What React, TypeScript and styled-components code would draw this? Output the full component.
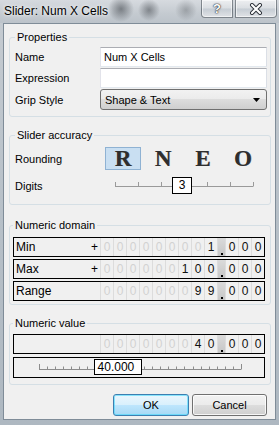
import React from 'react';
import styled, { createGlobalStyle } from 'styled-components';

const Global = createGlobalStyle`
  html, body { margin: 0; padding: 0; background: #fff; }
  body { font-family: "Liberation Sans", Arial, sans-serif; font-size: 11px; color: #000; }
  * { box-sizing: border-box; }
`;

const Window = styled.div`
  width: 279px;
  height: 425px;
  display: flex;
  flex-direction: column;
  background: linear-gradient(180deg, #c6ccd2 0%, #b7c0c8 50%, #aeb8c1 100%);
  overflow: hidden;
`;

const TitleBar = styled.div`
  height: 23px;
  flex: none;
  display: flex;
  align-items: flex-start;
  background:
    radial-gradient(circle at 121px 9px, rgba(55, 60, 66, 0.55) 0, rgba(55, 60, 66, 0) 13px),
    radial-gradient(circle at 149px 10px, rgba(55, 60, 66, 0.5) 0, rgba(55, 60, 66, 0) 11px),
    radial-gradient(circle at 186px 10px, rgba(70, 75, 80, 0.35) 0, rgba(70, 75, 80, 0) 11px),
    linear-gradient(180deg, #d6dadf 0%, #c4cad0 60%, #bcc3ca 100%);
`;

const TitleText = styled.div`
  flex: 1;
  padding-left: 4px;
  font-size: 12px;
  line-height: 22px;
  color: #000;
  text-shadow: 0 0 6px rgba(255, 255, 255, 0.9), 0 0 3px rgba(255, 255, 255, 0.9);
  white-space: nowrap;
`;

const Captions = styled.div`
  display: flex;
  gap: 2px;
  margin-right: 2px;
`;

const CaptionButton = styled.div<{ $w: number; $left?: boolean }>`
  width: ${(p) => p.$w}px;
  height: 18px;
  display: flex;
  align-items: center;
  justify-content: center;
  border: 1px solid rgba(45, 55, 65, 0.55);
  border-top: none;
  border-radius: ${(p) => (p.$left ? '0 0 0 4px' : '0 0 4px 0')};
  background: linear-gradient(
    180deg,
    rgba(255, 255, 255, 0.55) 0%,
    rgba(255, 255, 255, 0.3) 48%,
    rgba(190, 200, 210, 0.35) 52%,
    rgba(255, 255, 255, 0.5) 100%
  );
  box-shadow: inset 0 0 0 1px rgba(255, 255, 255, 0.55);
  color: #fff;
  font-weight: bold;
  font-size: 13px;
  text-shadow: 0 0 1px #000, 0 0 2px #223;
`;

const Frame = styled.div`
  flex: 1;
  display: flex;
  padding: 0 3px 5px 3px;
`;

const Client = styled.div`
  flex: 1;
  display: flex;
  flex-direction: column;
  background: #f0f0f0;
  border: 1px solid #7f8c98;
`;

const Group = styled.fieldset<{ $top: number; $pad: string }>`
  margin: ${(p) => p.$top}px 4px 0 5px;
  padding: ${(p) => p.$pad};
  border: 1px solid #d5dfe5;
  border-radius: 3px;
  min-width: 0;
`;

const Legend = styled.legend`
  padding: 0 2px;
  margin: 0;
  font-size: 11px;
  line-height: 14px;
`;

const FormGrid = styled.div`
  display: grid;
  grid-template-columns: 85px 1fr;
  row-gap: 1px;
  align-items: center;
`;

const Label = styled.div`
  font-size: 11px;
  white-space: nowrap;
`;

const TextBox = styled.div`
  height: 20px;
  background: #fff;
  border: 1px solid #abadb3;
  border-color: #abadb3 #dbdfe6 #e3e9ef #e2e3ea;
  padding-left: 3px;
  font-size: 11px;
  line-height: 18px;
`;

const Combo = styled.div`
  height: 21px;
  display: flex;
  align-items: center;
  justify-content: space-between;
  padding: 0 6px 0 4px;
  border: 1px solid #707070;
  border-radius: 3px;
  background: linear-gradient(180deg, #f2f2f2 0%, #ebebeb 49%, #dddddd 50%, #cfcfcf 100%);
  font-size: 11px;
`;

const AccuracyRow = styled.div<{ $h: number; $mt?: number }>`
  display: grid;
  grid-template-columns: 90px 1fr;
  align-items: center;
  height: ${(p) => p.$h}px;
  margin-top: ${(p) => p.$mt ?? 0}px;
`;

const Letters = styled.div`
  display: flex;
  gap: 4px;
`;

const LetterBox = styled.div<{ $active?: boolean }>`
  width: 36px;
  height: 23px;
  display: flex;
  align-items: center;
  justify-content: center;
  font-family: "Liberation Serif", "Times New Roman", serif;
  font-weight: bold;
  font-size: 23px;
  line-height: 23px;
  color: #2e2e2e;
  text-shadow: 0.5px 0 0 #8a8a8a;
  background: ${(p) => (p.$active ? '#c9dff2' : 'transparent')};
  border: 1px solid ${(p) => (p.$active ? '#8fb2d3' : 'transparent')};
`;

const SliderTrack = styled.div`
  position: relative;
  width: 160px;
  height: 18px;
`;

const SliderThumb = styled.div<{ $w: number; $h: number; $top: number }>`
  position: absolute;
  top: ${(p) => p.$top}px;
  width: ${(p) => p.$w}px;
  height: ${(p) => p.$h}px;
  background: #fff;
  border: 1px solid #000;
  font-size: 12px;
  line-height: ${(p) => p.$h - 2}px;
  text-align: center;
`;

const ValueThumb = styled(SliderThumb)`
  text-align: left;
  padding-left: 3px;
`;

const Rows = styled.div<{ $gap: number }>`
  display: flex;
  flex-direction: column;
  gap: ${(p) => p.$gap}px;
`;

const NumRow = styled.div<{ $h: number }>`
  height: ${(p) => p.$h}px;
  display: flex;
  align-items: stretch;
  border: 1px solid #000;
  font-size: 12px;
  position: relative;
`;

const RowLabel = styled.div`
  flex: 1;
  padding-left: 2px;
  display: flex;
  align-items: center;
`;

const Plus = styled.div`
  width: 10px;
  display: flex;
  align-items: center;
  justify-content: flex-end;
  padding-right: 2px;
`;

const Cells = styled.div`
  display: flex;
`;

const Cell = styled.div<{ $ghost?: boolean }>`
  width: 13px;
  display: flex;
  align-items: center;
  justify-content: center;
  border-left: 1px solid #dcdcdc;
  color: ${(p) => (p.$ghost ? '#d2d2d2' : '#111')};
  font-size: 12px;
`;

const Sep = styled.div`
  width: 8px;
  display: flex;
  align-items: flex-end;
  justify-content: center;
  border-left: 1px solid #dcdcdc;
  background: linear-gradient(180deg, #dadada 0%, #c6c6c6 100%);
`;

const Dot = styled.div`
  width: 2px;
  height: 2px;
  margin-bottom: 1px;
  background: #000;
`;

const Buttons = styled.div`
  display: flex;
  justify-content: flex-end;
  gap: 3px;
  margin: 9px 8px 0 0;
`;

const Button = styled.div<{ $w: number; $default?: boolean }>`
  width: ${(p) => p.$w}px;
  height: 22px;
  display: flex;
  align-items: center;
  justify-content: center;
  font-size: 11px;
  border-radius: 3px;
  border: 1px solid ${(p) => (p.$default ? '#3c7fb1' : '#707070')};
  box-shadow: inset 0 0 0 1px ${(p) => (p.$default ? 'rgba(72, 216, 251, 0.6)' : 'rgba(255,255,255,0.8)')};
  background: ${(p) =>
    p.$default
      ? 'linear-gradient(180deg, #eaf6fd 0%, #d9f0fc 49%, #bee6fd 50%, #a7d9f5 100%)'
      : 'linear-gradient(180deg, #f2f2f2 0%, #ebebeb 49%, #dddddd 50%, #cfcfcf 100%)'};
`;

function DigitStrip({ value }: { value: number }) {
  const [ip, dp] = value.toFixed(3).split('.');
  const padded = ip.padStart(9, '0');
  const firstSig = 9 - ip.length;
  return (
    <Cells>
      {padded.split('').map((d, i) => (
        <Cell key={'i' + i} $ghost={i < firstSig}>
          {d}
        </Cell>
      ))}
      <Sep>
        <Dot />
      </Sep>
      {dp.split('').map((d, i) => (
        <Cell key={'d' + i}>{d}</Cell>
      ))}
    </Cells>
  );
}

function DomainRow({ label, plus, value }: { label: string; plus?: boolean; value: number }) {
  return (
    <NumRow $h={20}>
      <RowLabel>{label}</RowLabel>
      <Plus>{plus ? '+' : ''}</Plus>
      <DigitStrip value={value} />
    </NumRow>
  );
}

function DigitsSlider({ value }: { value: number }) {
  const x0 = 10;
  const step = 23;
  const ticks = Array.from({ length: 7 }, (_, i) => x0 + i * step);
  const cx = x0 + value * step;
  return (
    <SliderTrack>
      <svg width="160" height="18" style={{ display: 'block' }}>
        <line x1={x0} y1={9.5} x2={x0 + 6 * step} y2={9.5} stroke="#9a9a9a" strokeWidth={1} />
        {ticks.map((t) => (
          <line key={t} x1={t + 0.5} y1={5} x2={t + 0.5} y2={9.5} stroke="#9a9a9a" strokeWidth={1} />
        ))}
      </svg>
      <SliderThumb $w={20} $h={17} $top={0} style={{ left: cx - 12 }}>
        {value}
      </SliderThumb>
    </SliderTrack>
  );
}

function ValueSlider({ value, min, max }: { value: number; min: number; max: number }) {
  const x0 = 25;
  const x1 = 227;
  const n = 25;
  const ticks = Array.from({ length: n + 1 }, (_, i) => x0 + ((x1 - x0) * i) / n);
  const cx = x0 + ((value - min) / (max - min)) * (x1 - x0);
  return (
    <NumRow $h={21}>
      <svg width="250" height="19" style={{ display: 'block' }}>
        <line x1={x0} y1={11.5} x2={x1} y2={11.5} stroke="#8c8c8c" strokeWidth={1} />
        {ticks.map((t, i) => {
          const r = Math.round(t) + 0.5;
          const tall = i === 0 || i === n;
          return <line key={i} x1={r} y1={tall ? 6 : 8.5} x2={r} y2={11.5} stroke="#8c8c8c" strokeWidth={1} />;
        })}
      </svg>
      <ValueThumb $w={48} $h={16} $top={1} style={{ left: cx - 25 }}>
        {value.toFixed(3)}
      </ValueThumb>
    </NumRow>
  );
}

function CloseGlyph() {
  return (
    <svg width="14" height="12" viewBox="0 0 14 12">
      <path d="M3 2 L11 10 M11 2 L3 10" stroke="#2a2f36" strokeWidth={4} strokeLinecap="round" />
      <path d="M3 2 L11 10 M11 2 L3 10" stroke="#ffffff" strokeWidth={2.2} strokeLinecap="round" />
    </svg>
  );
}

export default function App() {
  return (
    <>
      <Global />
      <Window>
        <TitleBar>
          <TitleText>Slider: Num X Cells</TitleText>
          <Captions>
            <CaptionButton $w={32} $left>
              ?
            </CaptionButton>
            <CaptionButton $w={42}>
              <CloseGlyph />
            </CaptionButton>
          </Captions>
        </TitleBar>
        <Frame>
          <Client>
            <Group $top={6} $pad="3px 3px 6px 5px">
              <Legend>Properties</Legend>
              <FormGrid>
                <Label>Name</Label>
                <TextBox>Num X Cells</TextBox>
                <Label>Expression</Label>
                <TextBox />
                <Label>Grip Style</Label>
                <Combo>
                  <span>Shape &amp; Text</span>
                  <svg width="7" height="4" viewBox="0 0 7 4">
                    <path d="M0 0 H7 L3.5 4 Z" fill="#000" />
                  </svg>
                </Combo>
              </FormGrid>
            </Group>

            <Group $top={11} $pad="5px 3px 9px 5px">
              <Legend>Slider accuracy</Legend>
              <AccuracyRow $h={23}>
                <Label>Rounding</Label>
                <Letters>
                  <LetterBox $active>R</LetterBox>
                  <LetterBox>N</LetterBox>
                  <LetterBox>E</LetterBox>
                  <LetterBox>O</LetterBox>
                </Letters>
              </AccuracyRow>
              <AccuracyRow $h={18} $mt={7}>
                <Label>Digits</Label>
                <DigitsSlider value={3} />
              </AccuracyRow>
            </Group>

            <Group $top={13} $pad="5px 5px 3px 3px">
              <Legend>Numeric domain</Legend>
              <Rows $gap={2}>
                <DomainRow label="Min" plus value={1} />
                <DomainRow label="Max" plus value={100} />
                <DomainRow label="Range" value={99} />
              </Rows>
            </Group>

            <Group $top={11} $pad="4px 5px 6px 3px">
              <Legend>Numeric value</Legend>
              <Rows $gap={3}>
                <DomainRow label="" value={40} />
                <ValueSlider value={40} min={1} max={100} />
              </Rows>
            </Group>

            <Buttons>
              <Button $w={76} $default>
                OK
              </Button>
              <Button $w={75}>Cancel</Button>
            </Buttons>
          </Client>
        </Frame>
      </Window>
    </>
  );
}
